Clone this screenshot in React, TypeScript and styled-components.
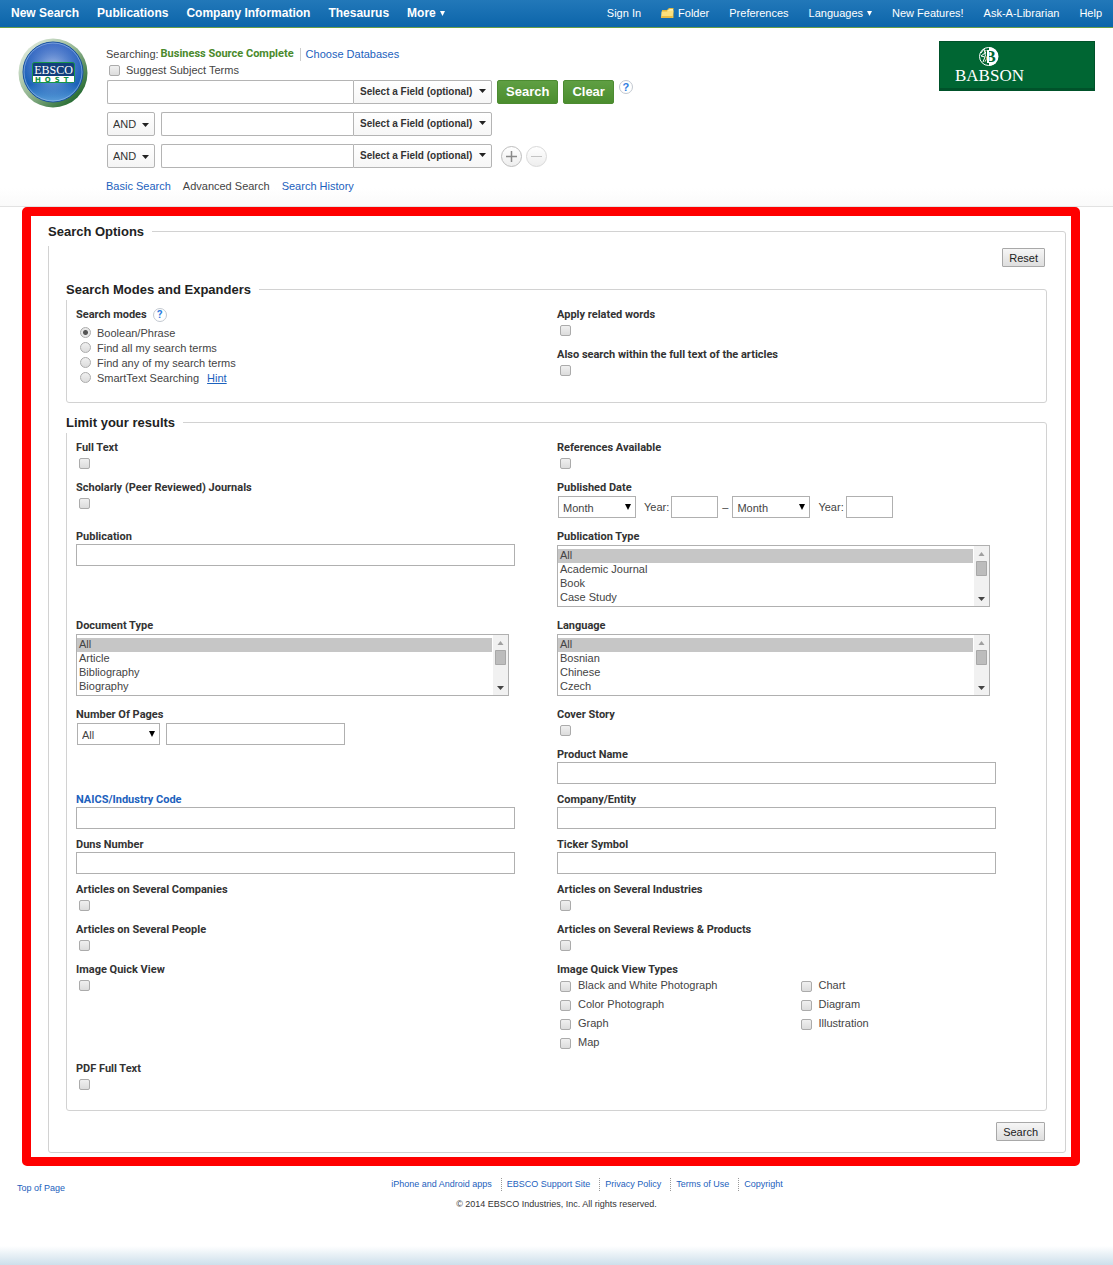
import React from "react";
import styled, { createGlobalStyle, css } from "styled-components";

const BLUE = "#1c61bd";
const LINE = "#d2d2d2";
const LABEL_FONT = `Roboto, "Liberation Sans", Arial, sans-serif`;

const GlobalStyle = createGlobalStyle`
  *, *::before, *::after { box-sizing: border-box; }
  body {
    margin: 0;
    background: #fff;
    color: #444;
    font: 11px/16px "Liberation Sans", Arial, sans-serif;
  }
  input, select, button { font: inherit; color: inherit; margin: 0; }
  a { color: ${BLUE}; text-decoration: none; }
`;

const Page = styled.div`
  min-height: 100vh;
  display: flex;
  flex-direction: column;
`;

/* ---------- top bar ---------- */

const TopBar = styled.nav`
  height: 28px;
  padding: 0 11px 1px;
  display: flex;
  align-items: center;
  justify-content: space-between;
  background: linear-gradient(#2278b9, #0c65aa);
  border-bottom: 1px solid #6a9f48;
`;

const NavGroup = styled.div<{ $main?: boolean }>`
  display: flex;
  align-items: center;
  gap: ${(p) => (p.$main ? 18 : 20)}px;
  font-size: ${(p) => (p.$main ? 12 : 11)}px;
  font-weight: ${(p) => (p.$main ? "bold" : "normal")};
`;

const NavLink = styled.a`
  display: flex;
  align-items: center;
  gap: 4px;
  color: #fff;
  white-space: nowrap;
`;

/* ---------- search header ---------- */

const Header = styled.header`
  display: flex;
  align-items: flex-start;
  padding: 10px 18px 12px;
  border-bottom: 1px solid #e2e2e2;
  background: linear-gradient(#fff 90%, #fafafa);
`;

const HeaderMain = styled.div`
  flex: 1;
  padding: 8px 0 0 18px;
`;

const SearchingLine = styled.div`
  display: flex;
  align-items: center;
`;

const Database = styled.strong`
  margin: 0 6px 0 2px;
  color: #4a8a2c;
  font-family: ${LABEL_FONT};
`;

const DividedLink = styled.a`
  padding-left: 5px;
  border-left: 1px solid #ccc;
  line-height: 13px;
`;

const QueryRows = styled.div`
  display: grid;
  gap: 8px;
  margin: 2px 0 10px 1px;
`;

const QueryRow = styled.div`
  display: flex;
  align-items: center;
  height: 24px;
`;

const QueryBox = styled.div`
  display: flex;
  flex: none;
  height: 24px;
`;

const QueryInput = styled.input<{ $wide?: boolean }>`
  width: ${(p) => (p.$wide ? 246 : 192)}px;
  border: 1px solid #b4b4b4;
  border-right: 0;
  border-radius: 2px 0 0 2px;
  background: #fff;
`;

const DropWrap = styled.span`
  position: relative;
  display: inline-flex;
  flex: none;
`;

const DropArrow = styled.svg<{ $right: number }>`
  position: absolute;
  right: ${(p) => p.$right}px;
  top: 50%;
  margin-top: -3px;
  pointer-events: none;
`;

const FieldSelect = styled.select`
  width: 139px;
  padding: 0 6px;
  appearance: none;
  border: 1px solid #b4b4b4;
  border-radius: 0 2px 2px 0;
  background: linear-gradient(#fff, #f6f6f6);
  color: #333;
  font-size: 10px;
  font-weight: bold;
`;

const OperatorSelect = styled.select`
  width: 48px;
  height: 24px;
  padding: 0 5px;
  appearance: none;
  border: 1px solid #b4b4b4;
  border-radius: 2px;
  background: linear-gradient(#fff, #f4f4f4);
  color: #333;
`;

const OperatorCell = styled.div`
  margin-right: 6px;
`;

const GreenButton = styled.button`
  height: 24px;
  margin-left: 5px;
  padding: 0 8px;
  border: 1px solid #4c8b31;
  border-radius: 2px;
  background: linear-gradient(#5f9f43, #4b8d2e);
  color: #fff;
  font-size: 13px;
  font-weight: bold;
`;

const HelpButton = styled.button`
  width: 14px;
  height: 14px;
  padding: 0;
  border: 1px solid #c2c8d0;
  border-radius: 50%;
  background: #fff;
  color: #2f7de0;
  font-size: 11px;
  font-weight: bold;
  line-height: 12px;
  text-align: center;
`;

const QueryHelp = styled.span`
  display: flex;
  align-self: flex-start;
  margin-left: 5px;
`;

const RoundButtons = styled.div`
  display: flex;
  gap: 4px;
  margin-left: 9px;
`;

const RoundButton = styled.button`
  display: grid;
  place-items: center;
  width: 21px;
  height: 21px;
  padding: 0;
  border: 1px solid #bdbdbd;
  border-radius: 50%;
  background: linear-gradient(#fff, #eee);
  color: #8a8a8a;
  &:disabled {
    border-color: #d9d9d9;
    color: #c4c4c4;
  }
`;

const ModeTabs = styled.nav`
  display: flex;
  gap: 12px;
`;

/* ---------- form pieces ---------- */

const Frame = styled.main`
  margin: 0 33px 0 22px;
  padding: 0 5px 4px 17px;
  border: 9px solid #f00;
  border-radius: 5px;
`;

const Group = styled.fieldset<{ $outer?: boolean }>`
  min-width: 0;
  margin: 0 0 ${(p) => (p.$outer ? 0 : 8)}px;
  padding: ${(p) => (p.$outer ? "2px 18px 11px 17px" : "7px 8px 16px 9px")};
  border: 1px solid ${LINE};
  border-radius: 3px;
`;

const GroupTitle = styled.legend<{ $outer?: boolean }>`
  margin-left: ${(p) => (p.$outer ? -18 : -10)}px;
  padding: 2px 8px 0 0;
  background: #fff;
  color: #222;
  font-size: 13px;
  font-weight: bold;
  line-height: ${(p) => (p.$outer ? 28 : 20)}px;
`;

const ButtonLine = styled.div<{ $top?: boolean }>`
  display: flex;
  justify-content: flex-end;
  padding-right: 2px;
  margin: ${(p) => (p.$top ? "0 0 11px" : "11px 0 0")};
`;

const PlainButton = styled.button`
  height: 19px;
  padding: 0 6px;
  border: 1px solid #a8a8a8;
  border-radius: 1px;
  background: linear-gradient(#f6f6f6, #dedede);
  color: #222;
  font-size: 11px;
  line-height: 16px;
`;

const Rows = styled.div`
  display: grid;
  gap: 7px;
`;

const Row = styled.div`
  display: grid;
  grid-template-columns: 1fr 1fr;
`;

const Stack = styled.div`
  display: grid;
  align-content: start;
  gap: 7px;
`;

const labelText = css`
  display: flex;
  align-items: center;
  height: 15px;
  padding-top: 1px;
  color: #333;
  font-family: ${LABEL_FONT};
  font-size: 11px;
  font-weight: bold;
`;

const Label = styled.label`
  ${labelText}
`;

const Caption = styled.div`
  ${labelText}
  gap: 6px;
`;

const Check = styled.input`
  appearance: none;
  flex: none;
  display: block;
  width: 11px;
  height: 11px;
  border: 1px solid #ababab;
  border-radius: 2px;
  background: linear-gradient(#f0f0f0, #dcdcdc);
`;

const CheckLine = styled.div`
  height: 18px;
  padding: 3px 3px 0;
`;

const RadioList = styled.div`
  padding: 3px 0 1px 1px;
`;

const Choice = styled.label`
  display: flex;
  align-items: center;
  gap: 6px;
  height: 15px;
  padding-left: 3px;
`;

const TypeChoice = styled.label`
  display: flex;
  gap: 7px;
  height: 19px;
  padding-left: 3px;
  input { margin-top: 4px; }
`;

const SuggestChoice = styled(Choice)`
  height: 16px;
`;

const Radio = styled(Check)`
  border-radius: 50%;
  &:checked {
    background: radial-gradient(circle, #555 0 2px, #e8e8e8 3px);
  }
`;

const TextBox = styled.input<{ $width?: number }>`
  display: block;
  width: ${(p) => p.$width ?? 439}px;
  max-width: 100%;
  height: 22px;
  padding: 0 4px;
  border: 1px solid #b0b0b0;
  background: #fff;
`;

const TextCell = styled.div`
  padding-bottom: 1px;
`;

const ControlLine = styled.div`
  display: flex;
  align-items: flex-start;
  height: 26px;
  margin-top: 1px;
  padding: 0 1px;
  line-height: 23px;
`;

const SmallSelect = styled.select<{ $width: number }>`
  width: ${(p) => p.$width}px;
  height: 22px;
  padding: 0 4px;
  appearance: none;
  border: 1px solid #b0b0b0;
  border-radius: 0;
  background: #fff;
`;

const YearLabel = styled.label`
  display: flex;
  gap: 2px;
  margin-left: 8px;
`;

const Dash = styled.span`
  margin: 0 4px;
`;

const PageCount = styled.div`
  display: flex;
  margin-left: 6px;
`;

const ListWrap = styled.div`
  position: relative;
  width: 433px;
  max-width: 100%;
  height: 66px;
  margin-top: 1px;
`;

const ListBox = styled.select`
  display: block;
  width: 100%;
  height: 62px;
  padding: 3px 16px 0 0;
  overflow: hidden;
  border: 1px solid #b0b0b0;
  border-radius: 0;
  background: #fff;
  &::-webkit-scrollbar { width: 0; }
  option {
    height: 14px;
    min-height: 14px;
    padding: 0 2px;
    line-height: 14px;
  }
  option:checked {
    background: linear-gradient(#c6c6c6, #c6c6c6);
    color: #444;
  }
`;

const ScrollTrack = styled.svg`
  position: absolute;
  top: 1px;
  right: 1px;
  pointer-events: none;
`;

const ImageTypes = styled.div`
  display: grid;
  grid-template-columns: 1fr 1fr;
  padding-bottom: 1px;
`;

const HintLink = styled.a`
  margin-left: 2px;
  text-decoration: underline;
`;

/* ---------- footer ---------- */

const Footer = styled.footer`
  flex: 1;
  padding: 10px 0 40px;
  font-size: 9px;
  background: linear-gradient(#fff, #cddfeb) bottom / 100% 19px no-repeat;
`;

const FooterTop = styled.div`
  display: flex;
  padding-left: 17px;
`;

const TopLink = styled.a`
  padding-top: 4px;
`;

const FooterLinks = styled.nav`
  flex: 1;
  display: flex;
  justify-content: center;
  align-items: center;
  height: 16px;
`;

const FooterLink = styled.a`
  padding: 0 9px 0 5px;
  line-height: 13px;
  & + & { border-left: 1px dotted #999; }
`;

const Copyright = styled.div`
  color: #333;
  text-align: center;
`;

/* ---------- drawings ---------- */

const Caret = () => (
  <svg width="5" height="5" viewBox="0 0 5 5" aria-hidden>
    <path d="M0 0h5L2.500 5z" fill="currentColor" />
  </svg>
);

const FolderIcon = () => (
  <svg width="13" height="12" viewBox="0 0 13 12" aria-hidden>
    <path d="M1 3h5l2-2h4.500v10H1z" fill="#e3b83c" />
    <path d="M7 3l2-1h3v2H6z" fill="#fff2b5" />
    <path d="M.5 4.500H6L7 3.500h5.500L11.500 11H0z" fill="#fbe07c" />
    <path d="M0 11h11.500l.3-2H.3z" fill="#e8bd45" />
  </svg>
);

const EbscoLogo = () => (
  <svg width="70" height="70" viewBox="0 0 70 70" role="img" aria-label="EBSCO Host">
    <defs>
      <linearGradient id="rim" x1="0" y1="0" x2="1" y2="1">
        <stop offset="0.100" stopColor="#e0ebdd" />
        <stop offset="0.500" stopColor="#8fb28c" />
        <stop offset="0.900" stopColor="#1b6429" />
      </linearGradient>
      <linearGradient id="orb" x1="0" y1="0" x2="0" y2="1">
        <stop offset="0" stopColor="#3f6cc6" />
        <stop offset="0.700" stopColor="#1a62b8" />
        <stop offset="1" stopColor="#5c9fda" />
      </linearGradient>
      <radialGradient id="glow" cx="0.500" cy="0.450" r="0.480">
        <stop offset="0" stopColor="#c4d2f2" stopOpacity="0.900" />
        <stop offset="1" stopColor="#7d9cdc" stopOpacity="0" />
      </radialGradient>
    </defs>
    <circle cx="35" cy="35" r="34.500" fill="url(#rim)" />
    <circle cx="35" cy="34" r="30" fill="url(#orb)" stroke="#164f9e" />
    <circle cx="35" cy="34" r="29" fill="url(#glow)" stroke="#9fc0ea" strokeOpacity="0.600" />
    <rect x="14.500" y="24.500" width="42" height="20" rx="2" fill="#123f7c" stroke="#17964a" />
    <path d="M15 38h41v6H15z" fill="#fff" />
    <text x="35.500" y="36" textAnchor="middle" fill="#fff" fontFamily="Liberation Serif, serif" fontSize="12">EBSCO</text>
    <text x="17" y="43.500" fill="#0e8f41" fontFamily="DejaVu Sans, sans-serif" fontSize="7" fontWeight="bold" letterSpacing="4">HOST</text>
  </svg>
);

const BabsonFigure = styled.svg`
  display: block;
  margin-top: 3px;
  flex: none;
`;

const BabsonLogo = () => (
  <BabsonFigure width="156" height="50" viewBox="0 0 156 50" role="img" aria-label="Babson">
    <rect width="156" height="50" fill="#00522a" />
    <rect x="1" y="1" width="154" height="46" fill="#006633" />
    <circle cx="49.500" cy="15.500" r="9" fill="none" stroke="#fff" />
    <path d="M50 6a9.500 9.500 0 0 1 0 19z" fill="#fff" />
    <path d="M42 12l3-4 1 4-4 3 4 1-2 5M47 9l-1 5 2 3-2 4" fill="none" stroke="#fff" />
    <text x="46" y="21" fill="#006633" fontFamily="Liberation Serif, serif" fontSize="16" fontWeight="bold">B</text>
    <path d="M48 9h2v13h-2z" fill="#fff" />
    <text x="16" y="40" fill="#fff" fontFamily="Liberation Serif, serif" fontSize="17">BABSON</text>
  </BabsonFigure>
);

/* ---------- composed controls ---------- */

const FieldDrop = ({ n }: { n: number }) => (
  <DropWrap>
    <FieldSelect aria-label={`Field ${n}`}>
      <option>Select a Field (optional)</option>
    </FieldSelect>
    <DropArrow $right={6} width="7" height="4" viewBox="0 0 7 4">
      <path d="M0 0h7L3.500 4z" fill="#222" />
    </DropArrow>
  </DropWrap>
);

const QueryLine = ({ n }: { n: number }) => (
  <>
    <OperatorCell>
      <DropWrap>
        <OperatorSelect aria-label={`Operator ${n}`}>
          <option>AND</option>
          <option>OR</option>
          <option>NOT</option>
        </OperatorSelect>
        <DropArrow $right={6} width="7" height="6" viewBox="0 0 7 6">
          <path d="M0 2h7L3.500 6z" fill="#222" />
        </DropArrow>
      </DropWrap>
    </OperatorCell>
    <QueryBox>
      <QueryInput aria-label={`Search term ${n}`} />
      <FieldDrop n={n} />
    </QueryBox>
  </>
);

const SmallDrop = ({ label, value, width, id }: { label: string; value: string; width: number; id?: string }) => (
  <DropWrap>
    <SmallSelect id={id} aria-label={label} $width={width}>
      <option>{value}</option>
    </SmallSelect>
    <DropArrow $right={5} width="6" height="6" viewBox="0 0 6 6">
      <path d="M0 0h6L3 6z" fill="#000" />
    </DropArrow>
  </DropWrap>
);

const CheckField = ({ id, label }: { id: string; label: string }) => (
  <div>
    <Label htmlFor={id}>{label}</Label>
    <CheckLine>
      <Check type="checkbox" id={id} />
    </CheckLine>
  </div>
);

const TextField = ({ id, label, href }: { id: string; label: string; href?: string }) => (
  <TextCell>
    <Label htmlFor={id}>{href ? <a href={href}>{label}</a> : label}</Label>
    <TextBox id={id} />
  </TextCell>
);

const ListField = ({ id, label, options }: { id: string; label: string; options: string[] }) => (
  <div>
    <Label htmlFor={id}>{label}</Label>
    <ListWrap>
      <ListBox id={id} multiple size={4} defaultValue={["All"]}>
        {options.map((o) => (
          <option key={o}>{o}</option>
        ))}
      </ListBox>
      <ScrollTrack width="15" height="60" viewBox="0 0 15 60" aria-hidden>
        <path d="M0 0h15v60H0z" fill="#f1f1f1" />
        <path d="M4.500 10h6l-3-4z" fill="#a0a0a0" />
        <path d="M2.500 15.500h10v14h-10z" fill="#bcbcbc" stroke="#a8a8a8" />
        <path d="M4 51h7l-3.500 4z" fill="#444" />
      </ScrollTrack>
    </ListWrap>
  </div>
);

const imageTypes = ["Black and White Photograph", "Chart", "Color Photograph", "Diagram", "Graph", "Illustration", "Map"];
const footerLinks = ["iPhone and Android apps", "EBSCO Support Site", "Privacy Policy", "Terms of Use", "Copyright"];
const searchModes = ["Boolean/Phrase", "Find all my search terms", "Find any of my search terms", "SmartText Searching"];

export default function App() {
  return (
    <Page>
      <GlobalStyle />
      <TopBar>
        <NavGroup $main>
          <NavLink href="#">New Search</NavLink>
          <NavLink href="#">Publications</NavLink>
          <NavLink href="#">Company Information</NavLink>
          <NavLink href="#">Thesaurus</NavLink>
          <NavLink href="#">More <Caret /></NavLink>
        </NavGroup>
        <NavGroup>
          <NavLink href="#">Sign In</NavLink>
          <NavLink href="#"><FolderIcon />Folder</NavLink>
          <NavLink href="#">Preferences</NavLink>
          <NavLink href="#">Languages <Caret /></NavLink>
          <NavLink href="#">New Features!</NavLink>
          <NavLink href="#">Ask-A-Librarian</NavLink>
          <NavLink href="#">Help</NavLink>
        </NavGroup>
      </TopBar>

      <Header>
        <EbscoLogo />
        <HeaderMain>
          <SearchingLine>
            Searching: <Database>Business Source Complete</Database>
            <DividedLink href="#">Choose Databases</DividedLink>
          </SearchingLine>
          <SuggestChoice>
            <Check type="checkbox" />
            Suggest Subject Terms
          </SuggestChoice>
          <QueryRows>
            <QueryRow>
              <QueryBox>
                <QueryInput $wide aria-label="Search term 1" />
                <FieldDrop n={1} />
              </QueryBox>
              <GreenButton>Search</GreenButton>
              <GreenButton>Clear</GreenButton>
              <QueryHelp><HelpButton aria-label="Help">?</HelpButton></QueryHelp>
            </QueryRow>
            <QueryRow><QueryLine n={2} /></QueryRow>
            <QueryRow>
              <QueryLine n={3} />
              <RoundButtons>
                <RoundButton aria-label="Add row">
                  <svg width="11" height="11" viewBox="0 0 11 11"><path d="M5.500 0v11M0 5.500h11" stroke="currentColor" strokeWidth="1.500" /></svg>
                </RoundButton>
                <RoundButton aria-label="Remove row" disabled>
                  <svg width="11" height="11" viewBox="0 0 11 11"><path d="M0 5.500h11" stroke="currentColor" strokeWidth="1" /></svg>
                </RoundButton>
              </RoundButtons>
            </QueryRow>
          </QueryRows>
          <ModeTabs>
            <a href="#">Basic Search</a>
            <span>Advanced Search</span>
            <a href="#">Search History</a>
          </ModeTabs>
        </HeaderMain>
        <BabsonLogo />
      </Header>

      <Frame>
        <Group $outer>
          <GroupTitle $outer>Search Options</GroupTitle>
          <ButtonLine $top><PlainButton>Reset</PlainButton></ButtonLine>

          <Group>
            <GroupTitle>Search Modes and Expanders</GroupTitle>
            <Row>
              <div>
                <Caption>Search modes <HelpButton aria-label="Help on search modes">?</HelpButton></Caption>
                <RadioList>
                  {searchModes.map((mode, i) => (
                    <Choice key={mode}>
                      <Radio type="radio" name="mode" defaultChecked={i === 0} />
                      {mode}
                      {i === 3 && <HintLink href="#">Hint</HintLink>}
                    </Choice>
                  ))}
                </RadioList>
              </div>
              <Stack>
                <CheckField id="related" label="Apply related words" />
                <CheckField id="within" label="Also search within the full text of the articles" />
              </Stack>
            </Row>
          </Group>

          <Group>
            <GroupTitle>Limit your results</GroupTitle>
            <Rows>
              <Row>
                <CheckField id="fulltext" label="Full Text" />
                <CheckField id="refs" label="References Available" />
              </Row>
              <Row>
                <CheckField id="scholarly" label="Scholarly (Peer Reviewed) Journals" />
                <div>
                  <Caption>Published Date</Caption>
                  <ControlLine>
                    <SmallDrop label="From month" value="Month" width={78} />
                    <YearLabel>Year: <TextBox $width={47} /></YearLabel>
                    <Dash>–</Dash>
                    <SmallDrop label="To month" value="Month" width={78} />
                    <YearLabel>Year: <TextBox $width={47} /></YearLabel>
                  </ControlLine>
                </div>
              </Row>
              <Row>
                <TextField id="publication" label="Publication" />
                <ListField id="pubtype" label="Publication Type" options={["All", "Academic Journal", "Book", "Case Study"]} />
              </Row>
              <Row>
                <ListField id="doctype" label="Document Type" options={["All", "Article", "Bibliography", "Biography"]} />
                <ListField id="language" label="Language" options={["All", "Bosnian", "Chinese", "Czech"]} />
              </Row>
              <Row>
                <div>
                  <Label htmlFor="pages">Number Of Pages</Label>
                  <ControlLine>
                    <SmallDrop id="pages" label="Number Of Pages" value="All" width={83} />
                    <PageCount><TextBox $width={179} aria-label="Page count" /></PageCount>
                  </ControlLine>
                </div>
                <Stack>
                  <CheckField id="cover" label="Cover Story" />
                  <TextField id="product" label="Product Name" />
                </Stack>
              </Row>
              <Row>
                <TextField id="naics" label="NAICS/Industry Code" href="#" />
                <TextField id="company" label="Company/Entity" />
              </Row>
              <Row>
                <TextField id="duns" label="Duns Number" />
                <TextField id="ticker" label="Ticker Symbol" />
              </Row>
              <Row>
                <CheckField id="companies" label="Articles on Several Companies" />
                <CheckField id="industries" label="Articles on Several Industries" />
              </Row>
              <Row>
                <CheckField id="people" label="Articles on Several People" />
                <CheckField id="reviews" label="Articles on Several Reviews & Products" />
              </Row>
              <Row>
                <CheckField id="quickview" label="Image Quick View" />
                <div>
                  <Caption>Image Quick View Types</Caption>
                  <ImageTypes>
                    {imageTypes.map((type) => (
                      <TypeChoice key={type}>
                        <Check type="checkbox" />
                        {type}
                      </TypeChoice>
                    ))}
                  </ImageTypes>
                </div>
              </Row>
              <Row>
                <CheckField id="pdf" label="PDF Full Text" />
              </Row>
            </Rows>
          </Group>

          <ButtonLine><PlainButton>Search</PlainButton></ButtonLine>
        </Group>
      </Frame>

      <Footer>
        <FooterTop>
          <TopLink href="#">Top of Page</TopLink>
          <FooterLinks>
            {footerLinks.map((text) => (
              <FooterLink href="#" key={text}>{text}</FooterLink>
            ))}
          </FooterLinks>
        </FooterTop>
        <Copyright>© 2014 EBSCO Industries, Inc. All rights reserved.</Copyright>
      </Footer>
    </Page>
  );
}
